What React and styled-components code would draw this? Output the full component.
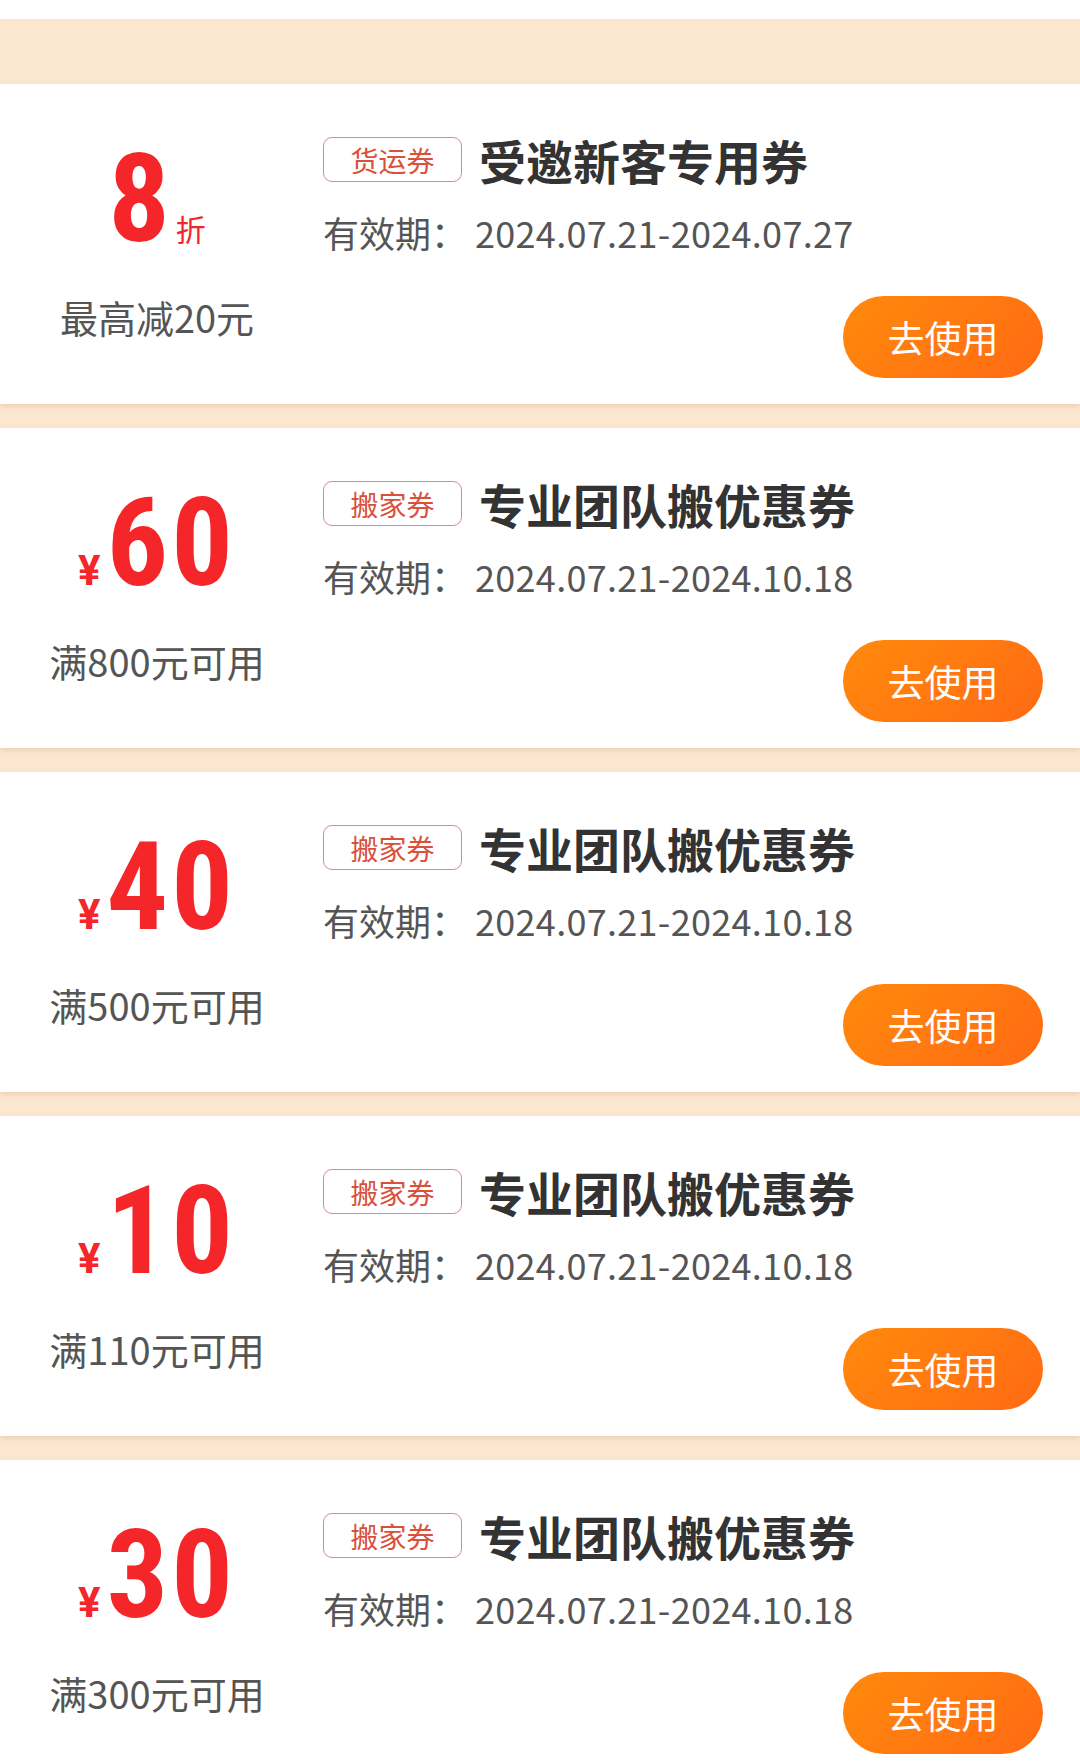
import React from 'react';
import styled, { createGlobalStyle } from 'styled-components';

const GlobalStyle = createGlobalStyle`
  html, body {
    margin: 0;
    padding: 0;
    background: #ffffff;
  }
  body {
    font-family: 'Noto Sans CJK SC', 'Noto Sans', sans-serif;
  }
`;

const Page = styled.div`
  width: 1080px;
  padding-top: 19px;
  background: #ffffff;
`;

const List = styled.div`
  display: flex;
  flex-direction: column;
  gap: 24px;
  padding-top: 65px;
  background: #fbe6d0;
`;

const Card = styled.div`
  display: flex;
  height: 320px;
  background: #ffffff;
  box-shadow: 0 3px 4px rgba(214, 178, 140, 0.35);
`;

const Left = styled.div`
  width: 314px;
  display: flex;
  flex-direction: column;
  align-items: center;
  padding-top: 55px;
  box-sizing: border-box;
`;

const Amount = styled.div`
  display: flex;
  align-items: baseline;
  color: #f5262a;
`;

const Yen = styled.span`
  font-family: Roboto, 'Liberation Sans', sans-serif;
  font-weight: 700;
  font-size: 42px;
  line-height: 1;
  margin-right: 6px;
`;

const Value = styled.span`
  font-family: 'Roboto Condensed', Roboto, 'Liberation Sans', sans-serif;
  font-weight: 700;
  font-size: 122px;
  line-height: 1;
  letter-spacing: 3px;
`;

const Unit = styled.span`
  font-family: 'Noto Sans CJK SC', sans-serif;
  font-size: 30px;
  line-height: 1;
  margin-left: 3px;
`;

const Condition = styled.div`
  margin-top: 37px;
  font-size: 38px;
  line-height: 1;
  color: #555555;
`;

const Right = styled.div`
  flex: 1;
  display: flex;
  flex-direction: column;
  padding: 52px 37px 26px 9px;
`;

const Header = styled.div`
  display: flex;
  align-items: center;
`;

const Tag = styled.span`
  display: inline-flex;
  align-items: center;
  justify-content: center;
  box-sizing: border-box;
  width: 139px;
  height: 45px;
  border: 1.5px solid #dc8b7b;
  border-radius: 9px;
  font-size: 28px;
  line-height: 1;
  color: #d9503b;
`;

const Title = styled.span`
  margin-left: 17px;
  font-size: 47px;
  font-weight: 700;
  line-height: 1;
  color: #333333;
`;

const Period = styled.div`
  margin-top: 31px;
  font-size: 36px;
  line-height: 1;
  letter-spacing: 0.3px;
  color: #555555;
`;

const PeriodLabel = styled.span`
  margin-right: 8px;
  letter-spacing: 0;
`;

const UseButton = styled.button`
  margin-top: auto;
  align-self: flex-end;
  width: 200px;
  height: 82px;
  border: none;
  border-radius: 41px;
  background: linear-gradient(135deg, #ff8a0c 0%, #ff6a14 100%);
  color: #ffffff;
  font-family: 'Noto Sans CJK SC', sans-serif;
  font-size: 37px;
  line-height: 1;
  cursor: pointer;
`;

const coupons = [
  { kind: 'discount', value: '8', cond: '最高减20元', tag: '货运券', title: '受邀新客专用券', end: '2024.07.27' },
  { kind: 'cash', value: '60', cond: '满800元可用', tag: '搬家券', title: '专业团队搬优惠券', end: '2024.10.18' },
  { kind: 'cash', value: '40', cond: '满500元可用', tag: '搬家券', title: '专业团队搬优惠券', end: '2024.10.18' },
  { kind: 'cash', value: '10', cond: '满110元可用', tag: '搬家券', title: '专业团队搬优惠券', end: '2024.10.18' },
  { kind: 'cash', value: '30', cond: '满300元可用', tag: '搬家券', title: '专业团队搬优惠券', end: '2024.10.18' },
];

function CouponCard({ coupon }) {
  return (
    <Card>
      <Left>
        <Amount>
          {coupon.kind === 'cash' && <Yen>¥</Yen>}
          <Value>{coupon.value}</Value>
          {coupon.kind === 'discount' && <Unit>折</Unit>}
        </Amount>
        <Condition>{coupon.cond}</Condition>
      </Left>
      <Right>
        <Header>
          <Tag>{coupon.tag}</Tag>
          <Title>{coupon.title}</Title>
        </Header>
        <Period>
          <PeriodLabel>有效期：</PeriodLabel>2024.07.21-{coupon.end}
        </Period>
        <UseButton>去使用</UseButton>
      </Right>
    </Card>
  );
}

export default function App() {
  return (
    <Page>
      <GlobalStyle />
      <List>
        {coupons.map((c, i) => (
          <CouponCard key={i} coupon={c} />
        ))}
      </List>
    </Page>
  );
}
